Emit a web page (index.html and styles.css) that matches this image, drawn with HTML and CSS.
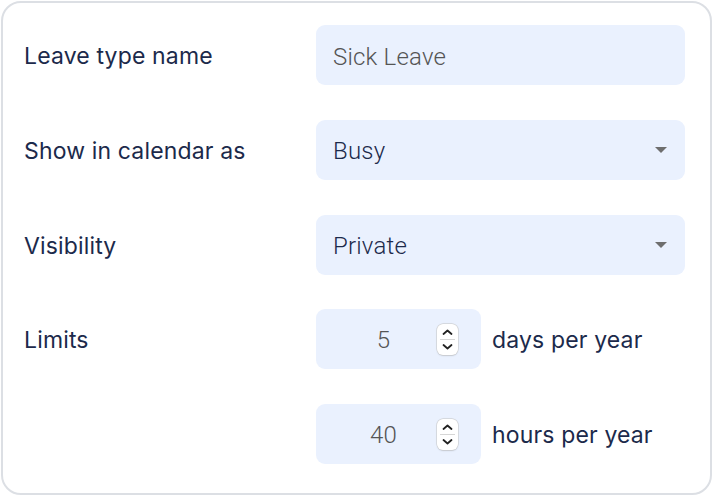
FILE: index.html
```html
<!DOCTYPE html>
<html>
<head>
<meta charset="utf-8">
<link rel="stylesheet" href="styles.css">
</head>
<body>
<div class="card">
  <div class="form">
    <div class="label">Leave type name</div>
    <div class="field"><span class="value muted">Sick Leave</span></div>

    <div class="label">Show in calendar as</div>
    <div class="field select"><span class="value">Busy</span><span class="caret"></span></div>

    <div class="label">Visibility</div>
    <div class="field select"><span class="value">Private</span><span class="caret"></span></div>

    <div class="label">Limits</div>
    <div class="limit">
      <div class="field number"><span class="num">5</span>
        <span class="spin"><svg width="21" height="31" viewBox="0 0 21 31"><path d="M6.5 10 L10.5 6.5 L14.5 10" fill="none" stroke="#222" stroke-width="1.8" stroke-linecap="round" stroke-linejoin="round"/><line x1="3" y1="15.5" x2="18" y2="15.5" stroke="#d6d6d6" stroke-width="1"/><path d="M6.5 21 L10.5 24.5 L14.5 21" fill="none" stroke="#222" stroke-width="1.8" stroke-linecap="round" stroke-linejoin="round"/></svg></span>
      </div>
      <span class="unit">days per year</span>
    </div>

    <div class="label"></div>
    <div class="limit">
      <div class="field number"><span class="num">40</span>
        <span class="spin"><svg width="21" height="31" viewBox="0 0 21 31"><path d="M6.5 10 L10.5 6.5 L14.5 10" fill="none" stroke="#222" stroke-width="1.8" stroke-linecap="round" stroke-linejoin="round"/><line x1="3" y1="15.5" x2="18" y2="15.5" stroke="#d6d6d6" stroke-width="1"/><path d="M6.5 21 L10.5 24.5 L14.5 21" fill="none" stroke="#222" stroke-width="1.8" stroke-linecap="round" stroke-linejoin="round"/></svg></span>
      </div>
      <span class="unit">hours per year</span>
    </div>
  </div>
</div>
</body>
</html>
```
FILE: styles.css
```css
html, body {
  margin: 0;
  padding: 0;
  background: #ffffff;
}
.card {
  box-sizing: border-box;
  width: 711px;
  height: 494px;
  margin: 1px 0 0 1px;
  border: 2px solid #dcdfe4;
  border-radius: 20px;
  background: #fff;
  padding: 22px 25px 0 21px;
}
.form {
  display: grid;
  grid-template-columns: 292px 369px;
  grid-auto-rows: 60px;
  row-gap: 34.75px;
  align-items: center;
}
.label {
  font-family: "Inter", "Liberation Sans", sans-serif;
  font-size: 23px;
  letter-spacing: 0.15px;
  color: #1c2a4b;
  padding-top: 2px;
}
.field {
  box-sizing: border-box;
  height: 60px;
  background: #eaf1fe;
  border-radius: 9px;
  display: flex;
  align-items: center;
  padding: 3px 17px 0;
  font-family: "Roboto", "Liberation Sans", sans-serif;
  font-size: 24px;
  font-weight: 300;
  letter-spacing: 0.2px;
  color: #1c2a4b;
}
.value.muted {
  color: #555555;
}
.select {
  justify-content: space-between;
}
.caret {
  width: 0;
  height: 0;
  border-left: 6px solid transparent;
  border-right: 6px solid transparent;
  border-top: 6px solid #6e6e6e;
  margin: 0 1px 3px 0;
}
.limit {
  display: flex;
  align-items: center;
  gap: 11px;
}
.number {
  width: 165px;
  padding: 0 23px 0 14px;
}
.num {
  flex: 1;
  text-align: center;
  color: #555555;
  padding-top: 1px;
}
.spin {
  display: block;
  width: 21px;
  height: 31px;
  background: #fff;
  border-radius: 6px;
  box-shadow: 0 0 0 0.5px #c8c8c8, 0 0.5px 1.5px rgba(0,0,0,0.15);
}
.spin svg {
  display: block;
}
.unit {
  font-family: "Inter", "Liberation Sans", sans-serif;
  font-size: 23px;
  letter-spacing: 0.15px;
  color: #1c2a4b;
  padding-top: 2px;
}
```
